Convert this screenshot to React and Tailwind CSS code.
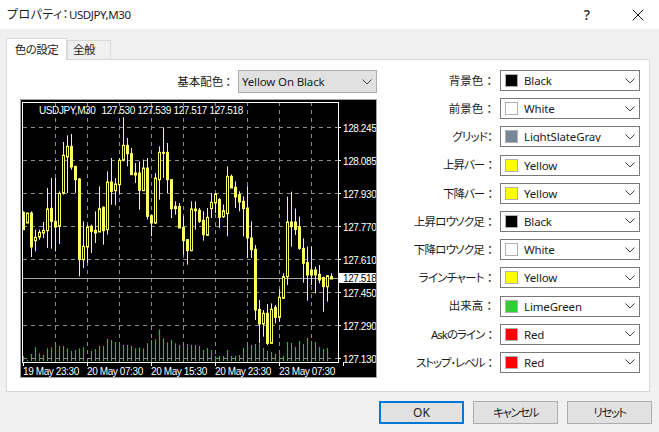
import React from "react";
import { X } from "lucide-react";

const uiFont = "font-['Noto_Sans','Noto_Sans_CJK_JP',sans-serif]";

// [high, bodyTop, bodyBottom, low, filled] in px, chart coordinates
const z = (v) => 98 + v / 3;
const y5 = (v) => 230 + v / 3;
const candles = [
  ...[
    [340, 343, 395, 395, 1], [345, 345, 375, 375, 0], [340, 345, 447, 477, 1], [395, 418, 428, 460, 0],
    [395, 403, 417, 425, 0], [372, 397, 405, 420, 0], [270, 333, 398, 450, 0], [240, 331, 370, 452, 1],
    [240, 370, 387, 460, 1], [280, 286, 385, 438, 0], [132, 172, 286, 290, 0], [112, 145, 177, 285, 0],
    [108, 145, 207, 215, 1], [205, 205, 245, 285, 1], [240, 243, 485, 535, 1], [370, 445, 485, 510, 0],
    [380, 387, 447, 495, 0], [380, 385, 400, 465, 1], [340, 397, 405, 435, 1], [265, 332, 402, 402, 0],
    [325, 328, 398, 440, 1], [220, 252, 395, 410, 0], [180, 252, 280, 320, 1], [240, 258, 278, 322, 0],
    [180, 187, 260, 290, 0], [58, 142, 187, 190, 0], [120, 142, 167, 205, 1], [150, 167, 230, 230, 1],
    [195, 225, 231, 255, 1], [190, 225, 277, 335, 1], [185, 210, 278, 278, 0], [180, 210, 355, 365, 1],
    [350, 353, 375, 415, 1], [225, 240, 375, 378, 0], [145, 163, 245, 305, 0], [88, 163, 165, 240, 1],
    [135, 163, 245, 285, 1], [243, 245, 332, 360, 1], [310, 325, 332, 350, 1], [315, 325, 390, 390, 1],
    [355, 388, 428, 470, 1], [425, 425, 458, 500, 1], [310, 333, 458, 460, 0], [310, 333, 338, 395, 1],
    [330, 337, 370, 375, 1], [340, 367, 410, 428, 1], [330, 358, 412, 412, 0], [285, 313, 332, 360, 0],
    [285, 288, 315, 345, 0], [300, 305, 358, 390, 1], [320, 338, 356, 360, 0], [205, 235, 347, 415, 0],
    [230, 235, 270, 270, 1], [250, 268, 297, 330, 1], [280, 290, 312, 340, 1], [295, 310, 332, 415, 1],
    [265, 330, 420, 480, 1], [370, 420, 455, 480, 1],
  ].map(([h, t, b, l, f]) => [z(h), z(t), z(b), z(l), f]),
  ...[
    [45, 58, 240, 270, 1], [210, 238, 282, 340, 1], [240, 250, 282, 320, 0], [222, 250, 340, 345, 1],
    [220, 238, 340, 340, 0], [225, 232, 262, 280, 1], [178, 202, 262, 275, 0], [130, 140, 205, 205, 0],
    [-100, -24, 140, 165, 0], [-115, -24, -10, 50, 1], [-64, -24, -2, 15, 1], [-40, -10, 55, 60, 1],
    [25, 55, 100, 158, 1], [50, 98, 135, 212, 1], [50, 120, 135, 165, 1], [110, 120, 135, 190, 1],
    [105, 133, 150, 160, 1], [140, 143, 170, 245, 1], [135, 137, 170, 215, 0], [130, 140, 147, 147, 1],
  ].map(([h, t, b, l, f]) => [y5(h), y5(t), y5(b), y5(l), f]),
];

const volumes = [
  ...[
    258, 270, 252, 232, 250, 255, 235, 232, 218, 228, 228, 235, 243, 240, 235, 232, 270, 243, 237, 228, 228, 207, 210,
    216, 218, 225, 225, 228, 235, 232, 235, 220, 210, 208, 178, 205, 217, 210, 220, 225, 228, 222, 225, 225, 228,
  ].map((v) => 270 + v / 3),
  350, 348, 350, 356, 356, 356, 350, 356, 356, 355, 348, 346, 345, 344, 344, 348, 351, 352, 354, 354, 356, 342, 343,
  347, 341, 344, 338, 341, 342, 347, 349, 348,
];

const gridY = [127.5, 160.5, 193.5, 226.5, 259.5, 292.5, 325.5, 358.5];
const gridX = [55.5, 87.5, 119.5, 151.5, 183.5, 215.5, 247.5, 279.5, 311.5];
const prices = ["128.245", "128.085", "127.930", "127.770", "127.610", "127.450", "127.290", "127.130"];
const times = ["19 May 23:30", "20 May 07:30", "20 May 15:30", "20 May 23:30", "23 May 07:30"];
const quotes = ["127.530", "127.539", "127.517", "127.518"];

const Chart = () => (
  <div className="w-[357px] h-[279px] border border-[#a3a3a3] bg-black">
    <svg viewBox="21 100 355 277" width="355" height="277" className="block" fontFamily="Liberation Sans, sans-serif" fontSize="10" letterSpacing="-0.4">
      {gridY.map((y) => (
        <line key={y} x1="23" x2="338" y1={y} y2={y} stroke="#8c8c8c" strokeDasharray="4 4" />
      ))}
      {gridX.map((x) => (
        <line key={x} x1={x} x2={x} y1="102" y2="362" stroke="#8c8c8c" strokeDasharray="4 4" />
      ))}
      <line x1="23" x2="338" y1="278.5" y2="278.5" stroke="#a8a8a8" />

      {volumes.map((top, i) => (
        <line key={i} x1={23.5 + i * 4} x2={23.5 + i * 4} y1={top} y2="361" stroke="#3fb03f" strokeWidth="1.2" />
      ))}

      {candles.map(([hi, top, bot, lo, filled], i) => {
        const x = 23.5 + i * 4;
        return (
          <g key={i} stroke="#ffff66">
            <line x1={x} x2={x} y1={hi} y2={lo} />
            <rect x={x - 1} y={top} width="2" height={Math.max(bot - top, 1)} fill={filled ? "#ffff66" : "#000"} />
          </g>
        );
      })}

      <rect x="22.5" y="102.5" width="316" height="260" fill="none" stroke="#fff" />
      {gridX.filter((_, i) => i % 2 === 0).map((x) => (
        <line key={x} x1={x + 32} x2={x + 32} y1="362" y2="366" stroke="#fff" />
      ))}
      <line x1="23.5" x2="23.5" y1="362" y2="366" stroke="#fff" />
      {gridY.map((y) => (
        <line key={y} x1="338" x2="341" y1={y} y2={y} stroke="#fff" />
      ))}

      <text x="39" y="114" fill="#fff">USDJPY,M30</text>
      {quotes.map((q, i) => (
        <text key={q} x={101.5 + i * 36} y="114" fill="#fff">{q}</text>
      ))}
      {prices.map((p, i) => (
        <text key={p} x="343" y={gridY[i] + 4} fill="#fff">{p}</text>
      ))}
      <rect x="338" y="273" width="39" height="10" fill="#fff" />
      <text x="343" y="282" fill="#000">127.518</text>
      {times.map((t, i) => (
        <text key={t} x={23 + i * 64} y="375" fill="#fff">{t}</text>
      ))}
    </svg>
  </div>
);

const Chevron = () => (
  <svg width="10" height="6" viewBox="0 0 10 6" className="shrink-0" fill="none" stroke="#404040">
    <polyline points="0.5,0.5 5,5 9.5,0.5" />
  </svg>
);

const colorRows = [
  { label: "背景色", color: "#000000", name: "Black", gap: "ml-[3px]" },
  { label: "前景色", color: "#ffffff", name: "White", gap: "ml-[3px]" },
  { label: "グリッド", color: "#778899", name: "LightSlateGray", clip: true, track: "tracking-[-0.8px]" },
  { label: "上昇バー", color: "#ffff00", name: "Yellow", gap: "ml-[3px]", track: "tracking-[-1px]" },
  { label: "下降バー", color: "#ffff00", name: "Yellow", gap: "ml-[3px]", track: "tracking-[-1px]" },
  { label: "上昇ロウソク足", color: "#000000", name: "Black", gap: "ml-[3px]", track: "tracking-[-0.8px]" },
  { label: "下降ロウソク足", color: "#ffffff", name: "White", gap: "ml-[3px]", track: "tracking-[-0.8px]" },
  { label: "ラインチャート", color: "#ffff00", name: "Yellow", gap: "ml-[3px]", track: "tracking-[-0.7px]" },
  { label: "出来高", color: "#32cd32", name: "LimeGreen", gap: "ml-[3px]" },
  { label: "Askのライン", color: "#ff0000", name: "Red", gap: "ml-[3px]", track: "tracking-[-1px]" },
  { label: "ストップ･レベル", color: "#ff0000", name: "Red", gap: "ml-[3px]", track: "tracking-[-1.1px]" },
];

const ColorRow = ({ label, color, name, clip, gap, track }) => (
  <div className="flex items-center h-[21px]">
    <span className={`flex-1 text-right pr-[8px] whitespace-nowrap text-[11.5px] ${track || ""}`}>
      {label}
      <span className={gap}>：</span>
    </span>
    <div className="w-[140px] h-[21px] border border-[#7a7a7a] bg-white flex items-center pl-[4px] pr-[4px]">
      <span className="w-[13px] h-[13px] border border-[#b0b0b0] shrink-0" style={{ backgroundColor: color }} />
      <span className={`ml-[6px] flex-1 pt-px text-[11.5px] tracking-[-0.15px] leading-[16px] ${clip ? "self-start h-[14px] mt-px overflow-hidden" : ""}`}>{name}</span>
      <Chevron />
    </div>
  </div>
);

export default function App() {
  return (
    <div className={`w-[659px] h-[432px] bg-[#f0f0f0] text-[12px] text-[#1c1c1c] overflow-hidden [font-feature-settings:'palt'] ${uiFont}`}>
      <div className="h-[29px] bg-white flex items-center pl-[7px] pr-[16px]">
        <span className="flex-1 tracking-[0.4px]">
          プロパティ：<span className="text-[11.5px] tracking-[-0.4px]">USDJPY,M30</span>
        </span>
        <span className="text-[14px] font-medium mr-[38px]">?</span>
        <X size={20} strokeWidth={1.1} className="text-black -mr-[5px]" />
      </div>

      <div className="pl-[6px] pr-[9px] pt-[9px]">
        <div className="flex items-end h-[22px] relative z-10 -mb-px text-[11.5px] tracking-[-0.5px]">
          <div className="w-[61px] h-[22px] bg-white border border-[#d9d9d9] border-b-0 flex items-center justify-center">色の設定</div>
          <div className="w-[44px] h-[20px] border border-[#d9d9d9] flex items-center pl-[5px]">全般</div>
        </div>
        <div className="h-[333px] bg-white border border-[#d9d9d9] flex pl-[13px] pt-[10px]">
          <div className="w-[357px]">
            <div className="flex items-center h-[23px] mb-[6px]">
              <span className="flex-1 text-right pr-[7px] text-[11.5px]">
                基本配色<span className="ml-[2px]">：</span>
              </span>
              <div className="w-[139px] h-[23px] border border-[#adadad] bg-[#e1e1e1] flex items-center pl-[3px] pr-[4px]">
                <span className="flex-1 text-[11.5px] tracking-[-0.15px]">Yellow On Black</span>
                <Chevron />
              </div>
            </div>
            <Chart />
          </div>
          <div className="w-[263px] h-[303px] flex flex-col justify-between">
            {colorRows.map((row) => (
              <ColorRow key={row.label} {...row} />
            ))}
          </div>
        </div>
        <div className="flex justify-end gap-[9px] mt-[9px] -mr-[2px]">
          <button className="w-[85px] h-[23px] border-2 border-[#0078d7] bg-[#e1e1e1]">OK</button>
          <button className="w-[85px] h-[23px] border border-[#adadad] bg-[#e1e1e1] text-[11.5px] tracking-[-1.5px]">キャンセル</button>
          <button className="w-[85px] h-[23px] border border-[#adadad] bg-[#e1e1e1] text-[11.5px] tracking-[-1.5px]">リセット</button>
        </div>
      </div>
    </div>
  );
}
